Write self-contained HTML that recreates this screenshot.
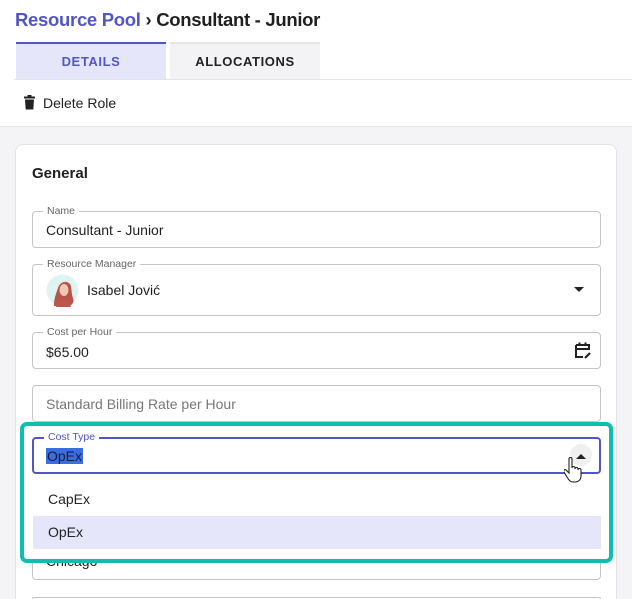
<!DOCTYPE html>
<html style="width:632px;height:599px;overflow:hidden"><head><meta charset="utf-8"><style>
*{box-sizing:border-box;margin:0;padding:0}
body{width:632px;height:599px;overflow:hidden;background:#fff;font-family:"Liberation Sans",sans-serif;color:#1f1f1f;position:relative}
.abs{position:absolute}
.field{position:absolute;left:32px;width:569px;border:1px solid #c4c4c4;border-radius:4px;background:#fff}
.lbl{position:absolute;top:-7px;left:10px;font-size:10.5px;color:#666;background:#fff;padding:0 4px;line-height:12px}
.val{position:absolute;left:13px;font-size:14px;color:#1f1f1f}
</style></head><body>
<div class="abs" style="left:15px;top:9px;font-size:18.5px;font-weight:bold;letter-spacing:-0.3px"><span style="color:#5156c5">Resource Pool</span> <span style="color:#222">›</span> <span style="color:#1f1f1f">Consultant - Junior</span></div>
<div class="abs" style="left:16px;top:42px;width:150px;height:37px;background:#e6e6fb;border-top:2px solid #5156c5;color:#5156c5;font-size:13px;font-weight:bold;text-align:center;line-height:36px;letter-spacing:0.6px">DETAILS</div>
<div class="abs" style="left:170px;top:42px;width:150px;height:37px;background:#f3f3f6;border-top:2px solid #e6e6ea;color:#222;font-size:13px;font-weight:bold;text-align:center;line-height:36px;letter-spacing:0.6px">ALLOCATIONS</div>
<div class="abs" style="left:14px;top:79px;width:618px;height:1px;background:#e4e4e8"></div>
<svg class="abs" style="left:24px;top:95px" width="11" height="15" viewBox="0 0 11 15"><rect x="0" y="1.5" width="11" height="2" fill="#222"/><rect x="3.5" y="0" width="4" height="2" fill="#222"/><path d="M1 4.5h9l-0.7 10h-7.6z" fill="#222"/></svg>
<div class="abs" style="left:43px;top:95px;font-size:14px;color:#222">Delete Role</div>
<div class="abs" style="left:0;top:126px;width:632px;height:473px;background:#f4f4f6;border-top:1px solid #e6e6e8"></div>
<div class="abs" style="left:15px;top:144px;width:602px;height:455px;background:#fff;border:1px solid #e3e3e6;border-bottom:none;border-radius:8px 8px 0 0"></div>
<div class="abs" style="left:32px;top:165px;font-size:15px;font-weight:bold;color:#1f1f1f">General</div>
<div class="field" style="top:211px;height:37px"><span class="lbl">Name</span><span class="val" style="top:10px">Consultant - Junior</span></div>
<div class="field" style="top:264px;height:52px"><span class="lbl">Resource Manager</span>
<svg class="abs" style="left:13px;top:9px" width="33" height="33" viewBox="0 0 33 33"><circle cx="16.5" cy="16.5" r="16" fill="#dff3f1"/><path d="M8 32c0-8 2-12 4-18 2-6 8-8 12-4 2 3 1 9 3 14 1 3 0 6-2 7z" fill="#b5564a"/><ellipse cx="18" cy="16" rx="4.5" ry="6" fill="#f2c7b5"/><path d="M10 33c1-5 4-7 8-7s6 3 7 7z" fill="#c0574b"/></svg>
<span class="val" style="left:54px;top:17px">Isabel Jović</span>
<span class="abs" style="right:16px;top:22px;width:0;height:0;border-left:5px solid transparent;border-right:5px solid transparent;border-top:5px solid #222"></span></div>
<div class="field" style="top:332px;height:37px"><span class="lbl">Cost per Hour</span><span class="val" style="top:11px">$65.00</span>
<svg class="abs" style="right:9px;top:9px" width="16" height="17" viewBox="0 0 16 17"><path d="M1 3h13v5M1 3v12h7M1 7h13" stroke="#222" stroke-width="2" fill="none"/><rect x="3.5" y="0.5" width="2" height="3" fill="#222"/><rect x="9.5" y="0.5" width="2" height="3" fill="#222"/><path d="M10 16l5-5" stroke="#222" stroke-width="2.2"/></svg></div>
<div class="field" style="top:385px;height:37px"><span class="val" style="top:10px;color:#777">Standard Billing Rate per Hour</span></div>
<div class="field" style="top:540px;height:40px"><span class="val" style="top:12px">Chicago</span></div>
<div class="abs" style="left:32px;top:597px;width:569px;height:2px;border:1px solid #c4c4c4;border-bottom:none;border-radius:4px 4px 0 0"></div>
<div class="abs" style="left:20px;top:422px;width:593px;height:141px;border:4px solid #0fbfae;border-radius:7px;background:#fff"></div>
<div class="field" style="top:437px;height:37px;border:2px solid #5156c5"><span class="lbl" style="color:#5156c5;top:-8px">Cost Type</span>
<span class="val" style="top:9px;left:12px;background:#3a6ee0;color:#1a1a40;padding:0 1px">OpEx</span>
<span class="abs" style="right:7px;top:5px;width:22px;height:22px;border-radius:50%;background:#f0f0f0"></span>
<span class="abs" style="right:13px;top:15px;width:0;height:0;border-left:5px solid transparent;border-right:5px solid transparent;border-bottom:5px solid #222"></span></div>
<div class="abs" style="left:33px;top:475px;width:568px;height:72px;background:#fff"></div>
<div class="abs" style="left:48px;top:491px;font-size:14px;color:#222">CapEx</div>
<div class="abs" style="left:33px;top:516px;width:568px;height:33px;background:#e6e6fb"></div>
<div class="abs" style="left:48px;top:524px;font-size:14px;color:#222">OpEx</div>
<svg class="abs" style="left:564px;top:457px" width="20" height="26" viewBox="0 0 20 26"><path d="M5 2c0-2 3-2 3 0v9c0-2 3-2 3 0v1c0-2 3-2 3 0v1c0-2 3-2 3 0v6c0 4-3 6-6 6h-2c-3 0-4-2-6-5l-3-5c-1-2 1-3 2-2l3 3z" fill="#fff" stroke="#222" stroke-width="1.1"/></svg>
</body></html>
